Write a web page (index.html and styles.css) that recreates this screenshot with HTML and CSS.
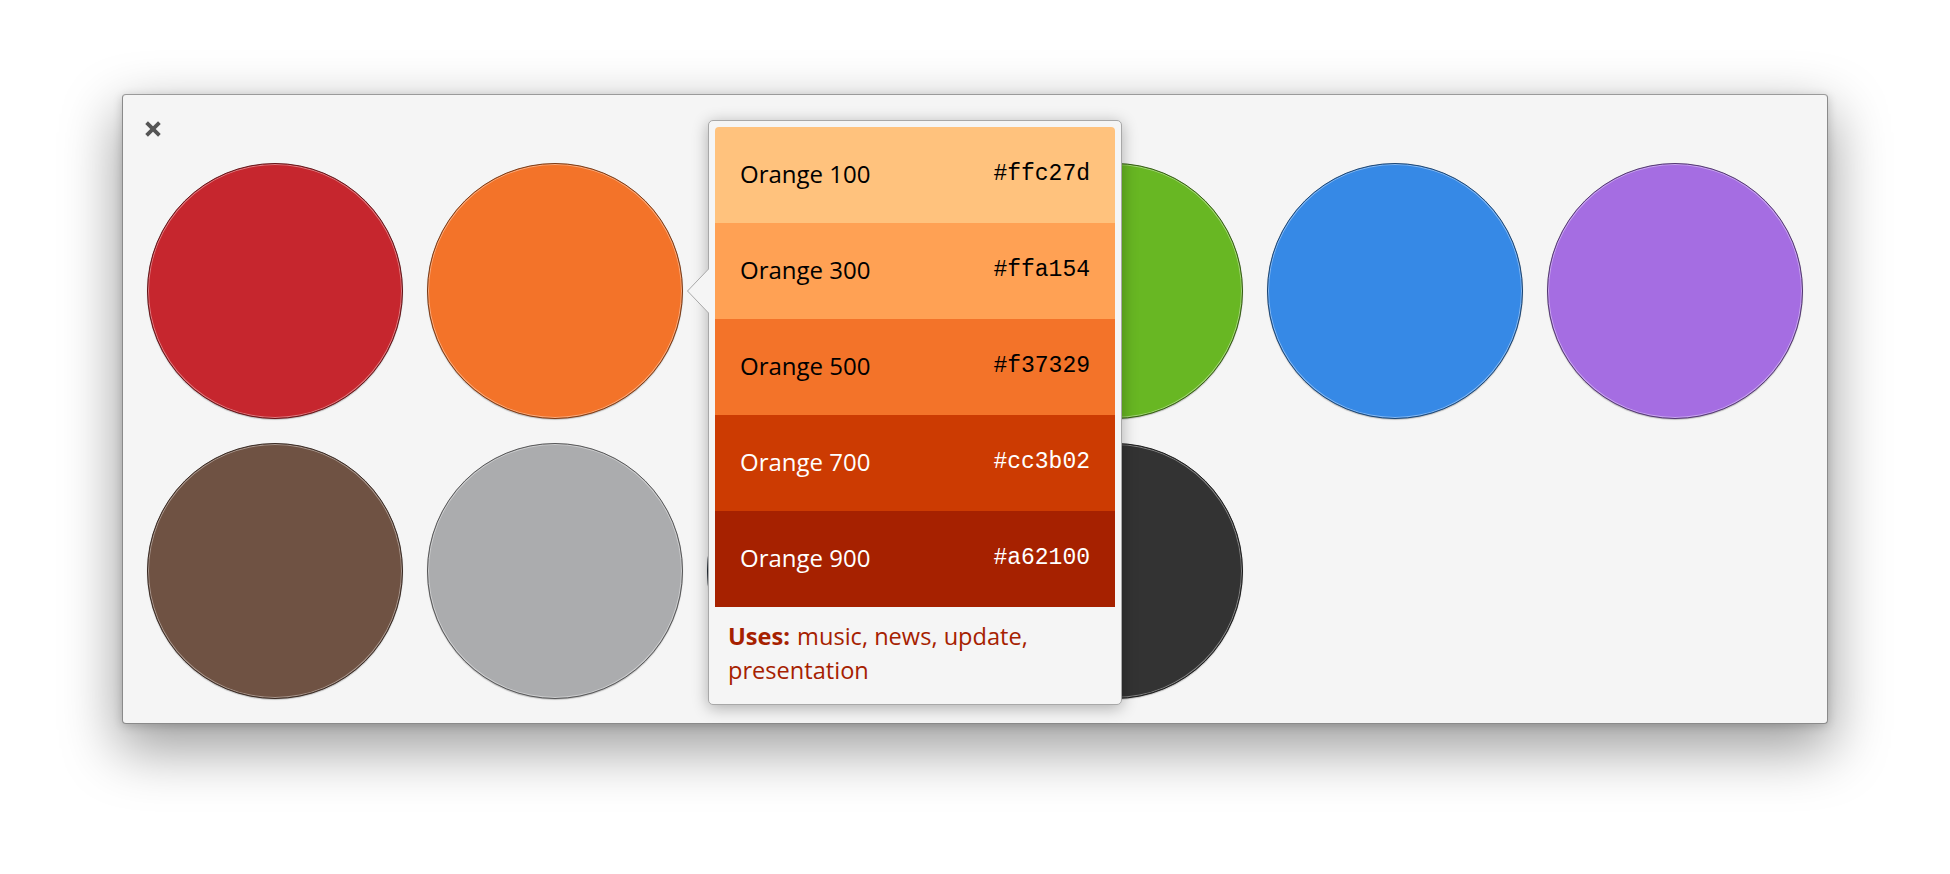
FILE: index.html
```html
<!DOCTYPE html>
<html lang="en">
<head>
<meta charset="utf-8">
<title>Palette</title>
<link rel="stylesheet" href="styles.css">
</head>
<body>
<div class="window">
  <div class="header">
    <button class="close" aria-label="Close">
      <svg width="18" height="18" viewBox="0 0 18 18"><path d="M2.6 2.6 L15.4 15.4 M15.4 2.6 L2.6 15.4" stroke="#555" stroke-width="3.8" fill="none"/></svg>
    </button>
  </div>
  <div class="grid">
    <div class="dot strawberry"></div>
    <div class="dot orange"></div>
    <div class="dot banana"></div>
    <div class="dot lime"></div>
    <div class="dot blueberry"></div>
    <div class="dot grape"></div>
    <div class="dot cocoa"></div>
    <div class="dot silver"></div>
    <div class="dot slate"></div>
    <div class="dot black"></div>
  </div>

  <div class="popover">
    <svg class="arrow" width="24" height="48" viewBox="0 0 24 48"><polygon points="23.5,1 1.5,24 23.5,47" fill="#f5f5f5" stroke="#a8a8a8" stroke-width="1"/><rect x="23" y="0" width="2" height="48" fill="#f5f5f5"/></svg>
    <div class="swatches">
      <div class="swatch o100"><span class="name">Orange 100</span><span class="hex">#ffc27d</span></div>
      <div class="swatch o300"><span class="name">Orange 300</span><span class="hex">#ffa154</span></div>
      <div class="swatch o500"><span class="name">Orange 500</span><span class="hex">#f37329</span></div>
      <div class="swatch o700"><span class="name">Orange 700</span><span class="hex">#cc3b02</span></div>
      <div class="swatch o900"><span class="name">Orange 900</span><span class="hex">#a62100</span></div>
    </div>
    <p class="uses"><b>Uses:</b> music, news, update, presentation</p>
  </div>
</div>
</body>
</html>
```

FILE: styles.css
```css
html, body {
  margin: 0;
  padding: 0;
  background: #ffffff;
}

html {
  height: 100%;
}

body {
  min-height: 100%;
  box-sizing: border-box;
  padding: 94px 0 0 122px;
  font-family: "Open Sans", "Noto Sans", sans-serif;
  overflow: hidden;
}

.window {
  position: relative;
  width: 1656px;
  padding: 0 24px 24px 24px;
  background: #f5f5f5;
  border: 1px solid #8a8a8a;
  border-top-color: #9a9a9a;
  border-radius: 4px;
  box-shadow: 0 22px 56px 4px rgba(0, 0, 0, 0.38), 0 2px 10px rgba(0, 0, 0, 0.18);
}

.header {
  height: 68px;
  padding-top: 23px;
  box-sizing: border-box;
}

.close {
  display: flex;
  align-items: center;
  justify-content: center;
  width: 22px;
  height: 22px;
  margin: 0 0 0 -5px;
  padding: 0;
  border: none;
  background: transparent;
}

.grid {
  display: grid;
  grid-template-columns: repeat(6, 256px);
  grid-auto-rows: 256px;
  gap: 24px;
}

.dot {
  --c: #888;
  box-sizing: border-box;
  width: 256px;
  height: 256px;
  border-radius: 50%;
  background: var(--c);
  border: 1.5px solid color-mix(in srgb, var(--c) 50%, #000);
  box-shadow:
    inset 0 0 0 1px rgba(255, 255, 255, 0.4),
    0 1px 1px rgba(0, 0, 0, 0.22);
}

.strawberry { --c: #c6262e; }
.orange { --c: #f37329; }
.banana { --c: #f9c440; }
.lime { --c: #68b723; }
.blueberry { --c: #3689e6; }
.grape { --c: #a56de2; }
.cocoa { --c: #6f5243; }
.silver { --c: #abacae; }
.slate { --c: #485a6c; }
.black { --c: #333333; }

.popover {
  position: absolute;
  left: 585px;
  top: 25px;
  width: 400px;
  padding: 6px 6px 0 6px;
  background: #f5f5f5;
  border: 1px solid #a8a8a8;
  border-radius: 5px;
  box-shadow: 0 3px 16px rgba(0, 0, 0, 0.3);
}

.arrow {
  position: absolute;
  left: -23px;
  top: 146px;
}

.swatches {
  border-radius: 4px 4px 0 0;
  overflow: hidden;
}

.swatch {
  height: 96px;
  box-sizing: border-box;
  display: flex;
  align-items: center;
  justify-content: space-between;
  padding: 0 25px 3px 25px;
  font-size: 24px;
  color: #000;
}

.swatch .name {
  font-family: "Open Sans", "Noto Sans", sans-serif;
}

.swatch .hex {
  font-family: "Liberation Mono", monospace;
  font-size: 23px;
  padding-top: 1px;
}

.o100 { background: #ffc27d; }
.o300 { background: #ffa154; }
.o500 { background: #f37329; }
.o700 { background: #cc3b02; color: #fff; }
.o900 { background: #a62100; color: #fff; }

.uses {
  margin: 0;
  padding: 12px 13px 17px 13px;
  font-size: 23.6px;
  line-height: 34px;
  color: #a62100;
}

.uses b {
  font-weight: 700;
  margin-right: 1px;
}
```
